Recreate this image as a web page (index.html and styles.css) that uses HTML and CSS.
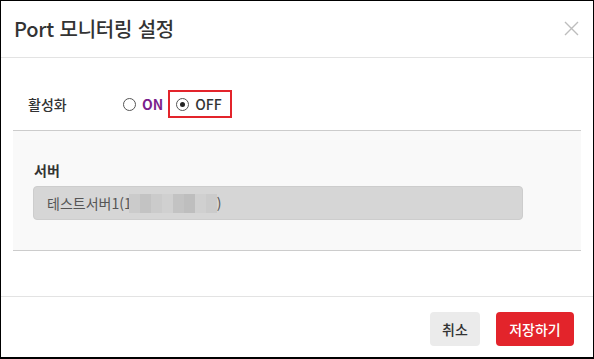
FILE: index.html
```html
<!DOCTYPE html>
<html lang="ko">
<head>
<meta charset="utf-8">
<title>Port 모니터링 설정</title>
<link rel="stylesheet" href="styles.css">
</head>
<body>
<div class="dialog">
  <div class="header">
    <h1 class="title">Port 모니터링 설정</h1>
    <button class="close" aria-label="닫기">
      <svg width="15" height="15" viewBox="0 0 15 15"><path d="M1 1L14 14M14 1L1 14" stroke="#bdbdbd" stroke-width="1.4" fill="none"/></svg>
    </button>
  </div>
  <div class="body">
    <div class="row">
      <div class="label">활성화</div>
      <label class="opt">
        <span class="radio"></span><span class="opt-text on">ON</span>
      </label>
      <label class="opt selected">
        <span class="radio checked"></span><span class="opt-text">OFF</span>
      </label>
    </div>
    <div class="panel">
      <div class="field-label">서버</div>
      <div class="input">
        <span>테스트서버1(1</span><span class="mask"><i class="m1"></i><i class="m2"></i><i class="m1"></i><i class="m3"></i><i class="m2"></i><i class="m4"></i><i class="m3"></i><i class="m1"></i></span><span>)</span>
      </div>
    </div>
  </div>
  <div class="footer">
    <button class="btn cancel">취소</button>
    <button class="btn save">저장하기</button>
  </div>
</div>
</body>
</html>
```
FILE: styles.css
```css
* { box-sizing: border-box; }
html, body { margin: 0; padding: 0; background: #fff; }
body { font-family: "Noto Sans CJK KR", "Noto Sans", sans-serif; color: #333; }

.dialog {
  width: 594px;
  height: 359px;
  border: 1px solid #000;
  border-bottom-width: 2px;
  background: #fff;
  display: flex;
  flex-direction: column;
}

.header {
  height: 57px;
  border-bottom: 1px solid #e3e3e3;
  display: flex;
  align-items: center;
  justify-content: space-between;
  padding: 0 14px 2px 13px;
}
.title {
  margin: 0;
  font-size: 20px;
  font-weight: 500;
  color: #333;
  letter-spacing: -0.2px;
}
.close {
  border: 0;
  background: none;
  padding: 0;
  width: 15px;
  height: 15px;
  display: flex;
}

.body {
  padding: 0 12px 45px 12px;
}
.row {
  display: flex;
  align-items: center;
  padding: 32px 0 12px 15px;
  border-bottom: 1px solid #cccccc;
}
.label {
  width: 95px;
  font-size: 14px;
  font-weight: 500;
  color: #333;
}
.opt {
  display: flex;
  align-items: center;
  height: 28px;
  font-size: 14px;
  margin-right: 5px;
}
.opt.selected {
  border: 2px solid #e3242b;
  padding: 0 8px 0 6px;
}
.radio {
  width: 13px;
  height: 13px;
  border: 1px solid #555;
  border-radius: 50%;
  margin-right: 6px;
  display: flex;
  align-items: center;
  justify-content: center;
  background: #fff;
}
.radio.checked::after {
  content: "";
  width: 5px;
  height: 5px;
  border-radius: 50%;
  background: #222;
}
.opt-text { font-weight: 500; color: #333; }
.opt-text.on { color: #7b1e8c; font-weight: 700; }

.panel {
  background: #f9f9f9;
  border-bottom: 1px solid #cccccc;
  padding: 29px 20px 30px 20px;
}
.field-label {
  font-size: 14px;
  font-weight: 700;
  line-height: 20px;
  color: #333;
  margin: 0 0 6px 1px;
}
.input {
  width: 490px;
  height: 34px;
  background: #d6d6d6;
  border: 1px solid #cdcdcd;
  border-radius: 4px;
  padding-left: 13px;
  display: flex;
  align-items: center;
  font-size: 14px;
  color: #555;
}
.mask { display: flex; height: 19px; margin-left: -3px; }
.mask i { display: block; width: 11px; height: 19px; }
.mask .m1 { background: #cbcbcb; }
.mask .m2 { background: #c3c3c3; }
.mask .m3 { background: #d0d0d0; }
.mask .m4 { background: #bebebe; }

.footer {
  margin-top: auto;
  border-top: 1px solid #e3e3e3;
  display: flex;
  justify-content: flex-end;
  gap: 16px;
  padding: 15px 19px 0 0;
  height: 61px;
}
.btn {
  height: 34px;
  border: 0;
  border-radius: 4px;
  font-family: inherit;
  font-size: 14px;
  font-weight: 500;
  padding: 0;
}
.cancel { width: 50px; background: #ebebeb; color: #333; }
.save { width: 78px; background: #e3242b; color: #fff; }
```
